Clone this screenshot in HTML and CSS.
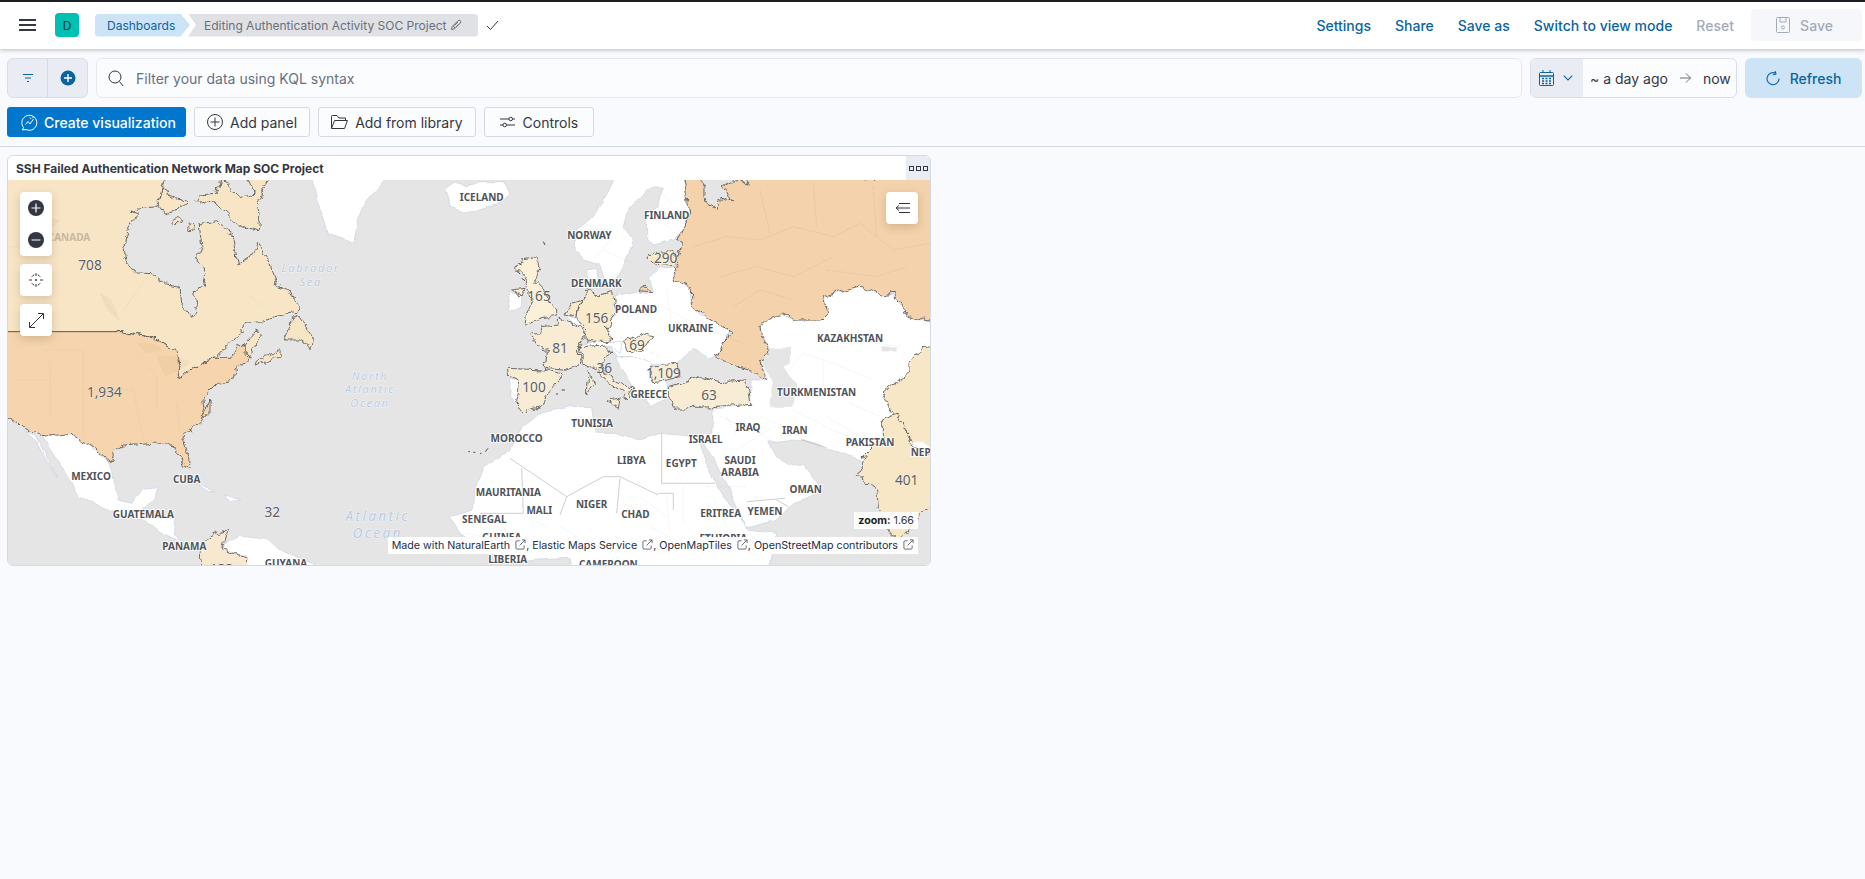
FILE: index.html
```html
<!DOCTYPE html>
<html lang="en">
<head>
<meta charset="utf-8">
<title>Editing Authentication Activity SOC Project</title>
<link rel="stylesheet" href="styles.css">
</head>
<body>
<svg class="defs" width="0" height="0" aria-hidden="true">
  <symbol id="ext" viewBox="0 0 12 12"><path d="M5 2H2.2A1.2 1.2 0 0 0 1 3.200V9.800A1.200 1.200 0 0 0 2.200 11H8.800A1.200 1.200 0 0 0 10 9.800V7M5 7L11 1M7.500 1H11V4.500" fill="none" stroke="#5a6472" stroke-width="1"/></symbol>
</svg>
<header class="topbar">
  <button class="menu" aria-label="menu"><span></span><span></span><span></span></button>
  <div class="logo">D</div>
  <nav class="crumbs">
    <span class="crumb crumb-first">Dashboards</span>
    <span class="crumb crumb-last">Editing Authentication Activity SOC Project
      <svg class="pencil" width="12" height="12" viewBox="0 0 12 12"><path d="M1.500 10.500L2.200 7.500L8 1.700A1.400 1.400 0 0 1 10.300 4L4.500 9.800ZM3 7L5 9M4.500 6.500L8 3M6 8L9.200 4.800" fill="none" stroke="#69707d" stroke-width="1"/></svg>
    </span>
  </nav>
  <svg class="check" width="13" height="11" viewBox="0 0 13 11"><path d="M1 6L4.500 9.500L12 1" fill="none" stroke="#343741" stroke-width="1"/></svg>
  <div class="actions">
    <a class="act">Settings</a>
    <a class="act">Share</a>
    <a class="act">Save as</a>
    <a class="act">Switch to view mode</a>
    <a class="act act-off">Reset</a>
    <span class="save">
      <svg width="14" height="16" viewBox="0 0 14 16"><path d="M1.500 .5H12.500A1 1 0 0 1 13.500 1.500V14.500A1 1 0 0 1 12.500 15.500H1.500A1 1 0 0 1 .5 14.500V1.500A1 1 0 0 1 1.500 .5ZM4 .5V5H10V.5" fill="none" stroke="#a2abba"/><circle cx="7" cy="10.500" r="1.500" fill="none" stroke="#a2abba"/></svg>
      Save
    </span>
  </div>
</header>

<section class="querybar">
  <div class="filters">
    <span class="fcell">
      <svg width="12" height="10" viewBox="0 0 12 10"><path d="M1 1.500H11M3 5H9M5 8.500H7" stroke="#0b64a0" stroke-width="1.200" fill="none"/></svg>
    </span>
    <span class="fcell fcell-last">
      <svg width="16" height="16" viewBox="0 0 16 16"><circle cx="8" cy="8" r="7.500" fill="#0b64a0"/><path d="M8 4V12M4 8H12" stroke="#fff" stroke-width="1.400"/></svg>
    </span>
  </div>
  <div class="search">
    <svg width="16" height="17" viewBox="0 0 16 17"><circle cx="7" cy="7" r="6" fill="none" stroke="#343741"/><path d="M11.500 11.500L15 16" stroke="#343741"/></svg>
    <span>Filter your data using KQL syntax</span>
  </div>
  <div class="dates">
    <span class="cal">
      <svg width="15" height="16" viewBox="0 0 15 16"><rect x=".5" y="2.500" width="14" height="13" rx="1" fill="none" stroke="#0b64a0"/><path d="M.5 6H14.500" stroke="#0b64a0" stroke-width="1.500"/><path d="M4 0V3M11 0V3" stroke="#0b64a0"/><path d="M3 8.500H5M6.500 8.500H8.500M10 8.500H12M3 11H5M6.500 11H8.500M10 11H12M3 13.500H5M6.500 13.500H8.500M10 13.500H12" stroke="#0b64a0" stroke-width="1.300"/></svg>
      <svg width="10" height="6" viewBox="0 0 10 6"><path d="M.7 .7L5 5L9.300 .7" fill="none" stroke="#0b64a0" stroke-width="1.100"/></svg>
    </span>
    <span class="range">~ a day ago
      <svg width="11" height="10" viewBox="0 0 11 10"><path d="M0 5H10.500M6 .5L10.500 5L6 9.500" fill="none" stroke="#69707d"/></svg>
      <em>now</em>
    </span>
  </div>
  <button class="refresh">
    <svg width="14" height="15" viewBox="0 0 14 15"><path d="M10 2.500A6 6 0 1 0 13 7.500" fill="none" stroke="#0b64a0" stroke-width="1.100"/><path d="M9 0L10 3L7 4" fill="none" stroke="#0b64a0" stroke-width="1.100"/></svg>
    Refresh
  </button>
</section>

<section class="toolrow">
  <button class="btn btn-primary">
    <svg width="17" height="17" viewBox="0 0 17 17"><path d="M2.500 13.500A7.500 7.500 0 1 1 5 15.500L1.500 16Z" fill="none" stroke="#fff"/><path d="M4.500 10.500L7 7.500L9 10L12.500 5M9 3.500L10 5M12 2.500V4" fill="none" stroke="#fff"/></svg>
    Create visualization
  </button>
  <button class="btn">
    <svg width="16" height="16" viewBox="0 0 16 16"><circle cx="8" cy="8" r="7.500" fill="none" stroke="#343741"/><path d="M8 3.500V12.500M3.500 8H12.500" stroke="#343741"/></svg>
    Add panel
  </button>
  <button class="btn">
    <svg width="17" height="14" viewBox="0 0 17 14"><path d="M.5 13V1.500A1 1 0 0 1 1.500 .5H6L8 3H14.500V5.500M.5 13.500H13.500L16.500 5.500H3.500Z" fill="none" stroke="#343741"/></svg>
    Add from library
  </button>
  <button class="btn btn-wide">
    <svg width="16" height="12" viewBox="0 0 16 12"><path d="M0 3H9M12.500 3H15M0 9H3M6.500 9H15" stroke="#343741"/><circle cx="10.700" cy="3" r="1.800" fill="none" stroke="#343741"/><circle cx="4.700" cy="9" r="1.800" fill="none" stroke="#343741"/></svg>
    Controls
  </button>
</section>

<main class="content">
  <article class="panel">
    <div class="panel-head">
      <h2>SSH Failed Authentication Network Map SOC Project</h2>
      <span class="panel-opts"><i></i><i></i><i></i></span>
    </div>
    <div class="map">
      <svg class="map-svg" viewBox="8 180 922 385">
        <defs>
          <filter id="rough" filterUnits="userSpaceOnUse" x="-100" y="0" width="1800" height="1400" color-interpolation-filters="sRGB">
            <feTurbulence type="fractalNoise" baseFrequency=".035" numOctaves="4" seed="7" result="n"/>
            <feDisplacementMap in="SourceGraphic" in2="n" scale="26" xChannelSelector="R" yChannelSelector="G"/>
          </filter>
          <filter id="soft" filterUnits="userSpaceOnUse" x="-100" y="0" width="1800" height="1400" color-interpolation-filters="sRGB">
            <feTurbulence type="fractalNoise" baseFrequency=".02" numOctaves="3" seed="3" result="n"/>
            <feDisplacementMap in="SourceGraphic" in2="n" scale="14" xChannelSelector="R" yChannelSelector="G"/>
          </filter>
        </defs>
        <rect x="8" y="180" width="922" height="385" class="sea"/>
        <g transform="translate(0 150) scale(.33333)">
          <g filter="url(#soft)">
            <polygon class="land" points="930,60 950,150 975,210 985,250 1030,265 1060,285 1075,210 1100,150 1180,60"/>
            <polygon class="land" points="1330,115 1360,100 1400,110 1440,95 1510,95 1530,130 1490,165 1440,180 1385,185 1350,170 1345,135"/>
            <polygon class="land" points="125,858 210,850 240,875 270,885 310,920 335,960 340,1000 355,1050 395,1060 430,1015 475,1010 460,1050 425,1085 480,1105 525,1100 520,1155 555,1180 600,1200 600,1190 540,1175 490,1150 430,1115 340,1090 240,1040 190,960"/>
            <polygon class="land" points="75,845 105,855 140,920 170,985 105,870"/>
            <polygon class="land" points="595,1005 645,1025 620,1025 585,1000"/>
            <polygon class="land" points="675,1035 725,1050 685,1055"/>
            <polygon class="land" points="680,1180 720,1155 800,1165 840,1200 950,1248 950,1300 740,1300 740,1220 670,1200"/>
          </g>
          <g filter="url(#rough)">
            <polygon class="ca" points="-20,60 500,60 490,115 480,150 470,170 430,175 385,180 415,190 400,215 380,245 372,290 375,320 400,365 450,368 500,405 540,412 545,460 575,505 590,480 580,420 610,410 618,370 590,320 605,290 598,225 650,215 680,240 700,275 715,345 750,325 775,280 810,340 825,400 870,425 900,470 895,490 855,495 780,515 740,520 700,570 650,620 640,622 585,650 545,685 530,680 540,640 530,605 480,575 440,560 385,550 365,545 -20,545"/>
            <polygon class="ca" points="735,580 770,540 785,560 755,600 750,628 735,610"/>
            <polygon class="ca" points="760,640 800,620 840,600 840,615 790,640 765,650"/>
            <polygon class="ca" points="850,570 880,505 900,495 925,545 940,570 935,592 900,570"/>
            <polygon class="ca" points="590,150 605,165 630,150 680,190 720,230 775,245 780,190 775,165 785,130 820,60 730,60 760,130 720,140 660,85 650,130 600,135"/>
            <polygon class="ca" points="490,110 510,140 560,155 530,180 490,190 475,170"/>
            <ellipse class="ca" cx="530" cy="215" rx="15" ry="9"/>
            <ellipse class="ca" cx="573" cy="231" rx="7" ry="11"/>
            <polygon class="us" points="-20,545 365,545 385,550 440,560 480,575 530,605 540,640 530,680 545,685 585,650 640,622 695,622 712,590 735,580 735,610 750,628 705,660 700,690 650,700 625,725 610,745 615,770 605,810 630,750 630,790 600,820 555,850 550,880 570,930 568,955 550,950 535,910 510,880 480,875 430,880 370,885 340,910 335,940 310,920 270,885 240,875 210,850 150,858 100,845 70,835 50,815 -20,790"/>
            <polygon class="col" points="600,1200 630,1160 685,1135 670,1200 740,1220 738,1300 610,1300"/>
          </g>
          <rect class="flat-ca" x="-20" y="505" width="370" height="40"/>
          <rect class="flat-us" x="-20" y="545" width="370" height="40"/>
          <path class="us-line" d="M-20 545H352"/>
          <path class="patch" d="M470 620C490 610 530 620 575 635L540 660L495 680ZM300 430C340 440 350 480 355 510L320 480ZM120 200L180 210L150 240ZM410 580C450 570 480 590 490 600L440 610Z"/>
          <path class="inner" d="M30 290H130M130 600H250V720H400M150 640V800M250 720V860M400 720L430 870M400 600L470 680M470 680V780M300 430L360 510M370 480L450 370M740 430L790 470M660 680L700 690M530 760L540 850M50 690H150"/>
          <text class="geo" x="1445" y="142">ICELAND</text>
          <text class="geo geo-faint" x="207" y="260">CANADA</text>
          <text class="geo" x="273" y="977">MEXICO</text>
          <text class="geo" x="560" y="987">CUBA</text>
          <text class="geo" x="430" y="1093">GUATEMALA</text>
          <text class="geo" x="553" y="1189">PANAMA</text>
          <text class="geo" x="858" y="1239">GUYANA</text>
          <text class="ocean" x="932" y="354">Labrador</text>
          <text class="ocean" x="932" y="394">Sea</text>
          <text class="ocean" x="1110" y="677">North</text>
          <text class="ocean" x="1110" y="717">Atlantic</text>
          <text class="ocean" x="1110" y="757">Ocean</text>
          <text class="ocean ocean-big" x="1133" y="1097">Atlantic</text>
          <text class="ocean ocean-big" x="1133" y="1147">Ocean</text>
          <text class="count" x="270" y="343">708</text>
          <text class="count" x="313" y="725">1,934</text>
          <text class="count" x="817" y="1085">32</text>
          <text class="count" x="665" y="1255">133</text>
        </g>
        <g transform="translate(460 150) scale(.33333)">
          <g filter="url(#soft)">
            <polygon class="land" points="480,60 440,130 400,200 350,240 345,300 370,330 420,345 435,395 460,400 490,350 510,300 520,270 490,230 500,190 560,120 580,110 610,115 590,170 560,190 560,260 580,285 640,270 680,230 690,190 670,60"/>
            <polygon class="land" points="465,440 535,425 578,428 565,385 600,350 650,350 650,390 690,410 695,470 740,500 810,540 780,610 745,630 700,595 670,620 650,640 575,645 530,620 470,620 450,590 440,530 470,490"/>
            <polygon class="land" points="470,620 530,620 575,640 570,665 580,695 620,690 625,735 610,750 575,770 555,740 520,715 480,650"/>
            <polygon class="land" points="355,585 410,575 490,575 480,610 445,585 365,610"/>
            <polygon class="land" points="315,495 350,505 378,540 340,520"/>
            <polygon class="land" points="385,395 380,360 410,355 415,395 395,420"/>
            <polygon class="land" points="145,425 185,430 185,470 150,485"/>
            <polygon class="land" points="150,680 180,690 170,760 150,740"/>
            <polygon class="land" points="70,950 150,900 190,830 240,790 330,770 395,770 400,810 410,850 470,850 540,870 600,850 710,860 735,935 785,1035 840,1095 860,1140 950,1150 920,1300 350,1300 330,1225 230,1230 150,1240 70,1200 0,1150 -30,1100 40,1080 45,1015"/>
            <polygon class="land" points="710,860 755,850 760,775 870,760 870,690 925,690 900,640 930,600 905,560 900,530 925,505 965,490 1005,510 1080,510 1100,490 1090,440 1200,405 1260,435 1300,430 1345,500 1440,520 1440,920 1205,930 1090,890 1020,870 950,880 925,875 950,920 985,940 1020,950 1030,945 1075,1005 1085,1025 985,1070 950,1110 860,1135 810,1020 770,940 730,880"/>
            <polygon class="sea" points="930,600 990,590 990,640 970,650 1010,700 1000,770 930,770 940,700 905,640"/>
            <rect class="sea" x="1265" y="592" width="45" height="12"/>
          </g>
          <path class="border" d="M150 925L320 1040L430 980H480L595 1035M605 850V1000H765M595 1030H640V1080M185 955L190 1090H60M320 1040L300 1095M480 985L470 1090M1025 870L1090 890M950 1050L985 1070M860 1055L975 1045"/>
          <path class="inner" d="M500 500L610 470L700 520M620 420L640 560M480 560L600 620M960 690L1030 610L1120 640L1240 690M1090 700V640M1030 740L1160 700M1120 560L1320 590M780 800L900 850L950 880M830 900L940 830M1100 800L1200 860M400 330L460 260M430 300L520 340M580 200L640 240M600 120L640 170M740 1010H860M670 1010V1120M540 1040L620 1100M760 1040L800 1130M200 1100L260 1130M300 1130L420 1200M570 1130L720 1210M600 330H700M800 800L830 860M900 800L1000 840M1000 780L1100 830M1170 760L1260 800M1090 830L1190 870M20 1150L120 1170M60 1100L160 1200M620 1040L630 1150"/>
          <g filter="url(#rough)">
            <polygon class="ru" points="665,60 680,130 690,200 650,270 670,280 640,350 650,390 690,410 695,470 740,500 810,540 780,610 765,618 830,650 885,665 920,692 900,640 930,600 905,560 900,530 925,505 965,490 1005,510 1080,510 1100,490 1090,440 1200,405 1260,435 1300,430 1345,500 1440,520 1440,60 1250,60 1240,100 1205,60 870,60 860,105 830,85 790,105 815,155 780,145 775,178 745,165 735,140 735,115 715,60"/>
            <polygon class="uk" points="215,325 235,320 240,350 225,395 250,420 270,460 290,475 290,495 240,505 195,525 200,490 215,460 205,420 190,380 170,360 185,330"/>
            <polygon class="uk" points="160,420 195,415 180,435"/>
            <polygon class="eu" points="300,505 340,520 378,548 355,600 365,640 310,660 255,655 262,605 208,560 245,550 250,530 290,525"/>
            <polygon class="de" points="385,420 415,435 455,425 470,490 440,530 455,570 420,575 378,570 378,540 350,510 365,450"/>
            <polygon class="de" points="335,460 365,450 350,500 315,495"/>
            <polygon class="eu" points="145,655 250,660 310,675 270,720 240,770 190,785 170,760 180,690 150,680"/>
            <polygon class="eu" points="360,590 445,585 455,615 420,640 440,675 490,700 520,715 495,750 490,725 440,690 410,660 370,640"/>
            <polygon class="eu" points="385,665 400,700 380,735 380,700"/>
            <polygon class="eu" points="435,750 480,745 475,772"/>
            <polygon class="eu" points="490,575 550,555 575,560 550,600 510,610"/>
            <polygon class="eu" points="575,645 650,640 660,680 620,690 580,695 570,665"/>
            <polygon class="eu" points="625,710 720,680 780,695 860,690 870,760 760,770 640,775 625,735"/>
            <polygon class="de" points="565,320 600,300 640,300 650,345 600,350"/>
            <polygon class="pl" points="535,425 555,408 578,428"/>
            <polygon class="in" points="1385,590 1440,585 1440,930 1350,870 1335,830 1305,795 1285,770 1265,730 1300,700 1350,670 1350,635 1370,620"/>
            <polygon class="in" points="1270,810 1310,790 1340,840 1350,880 1440,930 1440,1040 1380,1090 1340,1150 1310,1170 1290,1150 1255,1070 1250,1020 1200,980 1190,975 1225,920 1205,925 1270,860"/>
            <polygon class="land land-flat" points="1352,880 1380,875 1440,900 1440,930"/>
          </g>
          <path class="inner inner-ru" d="M700 290L800 260L900 270L1000 230L1120 260L1200 220L1300 300L1410 280M780 380L890 350L1000 380L1120 320M820 470L900 420L1000 450M1060 100L1070 230M900 120L930 250M1240 110L1250 260M750 540L850 580M1100 360L1250 380L1340 350"/>
          <path class="specks" d="M175 340L185 345M170 360L180 372M185 385L195 392M250 275L255 285M25 905H30M40 907H46M60 910H64M76 905L84 895M288 732H294M305 720H315M812 1085H822"/>
          <text class="geo" x="620" y="195">FINLAND</text>
          <text class="geo" x="388" y="256">NORWAY</text>
          <text class="geo" x="409" y="398">DENMARK</text>
          <text class="geo" x="528" y="477">POLAND</text>
          <text class="geo" x="692" y="535">UKRAINE</text>
          <text class="geo" x="1170" y="563">KAZAKHSTAN</text>
          <text class="geo" x="1070" y="727">TURKMENISTAN</text>
          <text class="geo" x="567" y="733">GREECE</text>
          <text class="geo" x="396" y="820">TUNISIA</text>
          <text class="geo" x="864" y="832">IRAQ</text>
          <text class="geo" x="1005" y="840">IRAN</text>
          <text class="geo" x="170" y="863">MOROCCO</text>
          <text class="geo" x="737" y="868">ISRAEL</text>
          <text class="geo" x="514" y="930">LIBYA</text>
          <text class="geo" x="664" y="939">EGYPT</text>
          <text class="geo" x="840" y="930">SAUDI</text>
          <text class="geo" x="840" y="966">ARABIA</text>
          <text class="geo" x="1230" y="876">PAKISTAN</text>
          <text class="geo" x="1400" y="905">NEPAL</text>
          <text class="geo" x="1037" y="1016">OMAN</text>
          <text class="geo" x="145" y="1027">MAURITANIA</text>
          <text class="geo" x="238" y="1081">MALI</text>
          <text class="geo" x="395" y="1063">NIGER</text>
          <text class="geo" x="526" y="1092">CHAD</text>
          <text class="geo" x="782" y="1088">ERITREA</text>
          <text class="geo" x="915" y="1083">YEMEN</text>
          <text class="geo" x="73" y="1108">SENEGAL</text>
          <text class="geo" x="125" y="1160">GUINEA</text>
          <text class="geo" x="790" y="1163">ETHIOPIA</text>
          <text class="geo" x="143" y="1228">LIBERIA</text>
          <text class="geo" x="445" y="1242">CAMEROON</text>
          <text class="count" x="237" y="438">165</text>
          <text class="count" x="410" y="502">156</text>
          <text class="count" x="300" y="594">81</text>
          <text class="count" x="222" y="710">100</text>
          <text class="count" x="433" y="653">36</text>
          <text class="count" x="531" y="583">69</text>
          <text class="count" x="617" y="323">290</text>
          <text class="count" x="610" y="667">1,109</text>
          <text class="count" x="747" y="734">63</text>
          <text class="count" x="1340" y="988">401</text>
        </g>
      </svg>
      <div class="ctl ctl-zoom">
        <span class="ctl-cell"><svg width="16" height="16" viewBox="0 0 16 16"><circle cx="8" cy="8" r="8" fill="#343741"/><path d="M8 3.500V12.500M3.500 8H12.500" stroke="#fff" stroke-width="1.200"/></svg></span>
        <span class="ctl-cell"><svg width="16" height="16" viewBox="0 0 16 16"><circle cx="8" cy="8" r="8" fill="#343741"/><path d="M3.500 8H12.500" stroke="#fff" stroke-width="1.200"/></svg></span>
      </div>
      <div class="ctl ctl-locate"><span class="ctl-cell"><svg width="16" height="16" viewBox="0 0 16 16"><path d="M3.800 4.800A5.500 5.500 0 0 1 6.200 2.800M9.800 2.800A5.500 5.500 0 0 1 12.200 4.800M12.200 11.200A5.500 5.500 0 0 1 9.800 13.200M6.200 13.200A5.500 5.500 0 0 1 3.800 11.200" fill="none" stroke="#343741"/><circle cx="8" cy="8" r="1" fill="#343741"/><path d="M8 1V4M8 12V15M1 8H4M12 8H15" stroke="#343741"/></svg></span></div>
      <div class="ctl ctl-expand"><span class="ctl-cell"><svg width="15" height="15" viewBox="0 0 15 15"><path d="M1 14L14 1M9 .5H14.500V6M.5 9V14.500H6" fill="none" stroke="#343741"/></svg></span></div>
      <div class="ctl ctl-layers"><span class="ctl-cell"><svg width="15" height="10" viewBox="0 0 15 10"><path d="M4 .5H15M1 5H15M4 9.500H15M4 2.500L1 5L4 7.500" fill="none" stroke="#343741"/></svg></span></div>
      <div class="zoomtag"><b>zoom:</b> 1.66</div>
      <div class="attrib">Made with NaturalEarth <svg class="ext"><use href="#ext"/></svg>, Elastic Maps Service <svg class="ext"><use href="#ext"/></svg>, OpenMapTiles <svg class="ext"><use href="#ext"/></svg>, OpenStreetMap contributors <svg class="ext"><use href="#ext"/></svg></div>
    </div>
  </article>
</main>
</body>
</html>
```
FILE: styles.css
```css
* { box-sizing: border-box; }
html, body { height: 100%; }
body {
  margin: 0;
  background: #f8fafd;
  font-family: Inter, "Liberation Sans", sans-serif;
  font-size: 14px;
  color: #343741;
  overflow: hidden;
}
button { font: inherit; cursor: pointer; }
.defs { position: absolute; }

.topbar {
  height: 49px;
  border-top: 2px solid #1d1e24;
  background: #fff;
  box-shadow: 0 1px 4px rgba(60, 70, 90, .35);
  display: flex;
  align-items: center;
  padding: 0 3px 0 19px;
}
.menu {
  width: 17px;
  height: 12px;
  padding: 0;
  border: 0;
  background: none;
  display: flex;
  flex-direction: column;
  justify-content: space-between;
  margin-top: -1px;
}
.menu span { display: block; height: 2px; background: #343741; }
.logo {
  width: 24px;
  height: 24px;
  margin-left: 19px;
  border-radius: 4px;
  background: #00bfb3;
  color: #1d3b3a;
  font-size: 12px;
  display: flex;
  align-items: center;
  justify-content: center;
  margin-top: -1px;
}
.crumbs { display: flex; margin-left: 16px; font-size: 12px; margin-top: -1px; }
.crumb { height: 23px; display: flex; align-items: center; white-space: nowrap; }
.crumb-first {
  width: 95px;
  padding-left: 12px;
  background: #cce4f5;
  color: #0b64a0;
  border-radius: 4px 0 0 4px;
  clip-path: polygon(0 0, 90% 0, 100% 50%, 90% 100%, 0 100%);
}
.crumb-last {
  width: 290px;
  margin-left: -2px;
  padding-left: 16px;
  background: #e0e1e5;
  color: #69707d;
  border-radius: 0 4px 4px 0;
  clip-path: polygon(0 0, 100% 0, 100% 100%, 0 100%, 8px 50%);
}
.pencil { margin-left: 4px; }
.check { margin-left: 8px; margin-top: -1px; }
.actions { margin-left: auto; display: flex; align-items: center; gap: 24px; margin-top: -1px; }
.act { color: #0b64a0; font-weight: 450; font-size: 14px; }
.act-off { color: #a2abba; }
.save {
  width: 111px;
  height: 32px;
  margin-left: -7px;
  background: #f5f7fa;
  border-radius: 4px;
  color: #a2abba;
  font-weight: 450;
  display: flex;
  align-items: center;
  justify-content: center;
  gap: 10px;
  padding-right: 4px;
}

.querybar {
  display: flex;
  height: 40px;
  margin-top: 9px;
  padding: 0 3px 0 7px;
}
.filters {
  width: 81px;
  display: flex;
  background: #e9edf3;
  border: 1px solid #d8dee8;
  border-radius: 6px;
}
.fcell { flex: 1; display: flex; align-items: center; justify-content: center; }
.fcell-last { border-left: 1px solid #d3dae6; }
.search {
  flex: 1;
  margin-left: 8px;
  background: #fbfcfd;
  border: 1px solid #e6e9f0;
  border-radius: 6px;
  display: flex;
  align-items: center;
  padding-left: 11px;
  gap: 12px;
  color: #69707d;
}
.dates {
  width: 207px;
  margin-left: 8px;
  display: flex;
  background: #fbfcfd;
  border: 1px solid #d8dee8;
  border-radius: 6px;
  overflow: hidden;
}
.cal {
  width: 52px;
  background: #e9edf3;
  display: flex;
  align-items: center;
  justify-content: center;
  gap: 9px;
  padding-right: 2px;
}
.range { display: flex; align-items: center; padding-left: 7px; gap: 12px; font-size: 14px; white-space: nowrap; }
.range em { font-style: normal; }
.refresh {
  width: 117px;
  margin-left: 8px;
  border: 0;
  border-radius: 6px;
  background: #cce4f5;
  color: #0b64a0;
  font-weight: 450;
  display: flex;
  align-items: center;
  justify-content: center;
  gap: 10px;
  padding: 0;
}

.toolrow {
  display: flex;
  gap: 8px;
  height: 40px;
  margin-top: 9px;
  padding: 0 0 9px 7px;
  border-bottom: 1px solid #d3dae6;
}
.btn {
  height: 30px;
  padding: 0 12px;
  background: #fbfcfd;
  border: 1px solid #d3dae6;
  border-radius: 3px;
  color: #343741;
  display: flex;
  align-items: center;
  gap: 7px;
  white-space: nowrap;
}
.btn-primary {
  width: 179px;
  padding: 0 0 0 13px;
  gap: 6px;
  background: #0077cc;
  border-color: #0077cc;
  color: #fff;
  font-weight: 450;
}
.btn-wide { padding: 0 15px; }

.content { padding: 8px 0 0 7px; }
.panel {
  width: 924px;
  height: 411px;
  background: #fff;
  border: 1px solid #d3dae6;
  border-radius: 6px;
  overflow: hidden;
}
.panel-head { height: 24px; display: flex; align-items: center; justify-content: space-between; padding-left: 8px; }
.panel-head h2 { margin: 0; font-size: 12px; font-weight: 700; color: #343741; }
.panel-opts {
  width: 24px;
  height: 24px;
  background: #e9edf3;
  display: flex;
  align-items: center;
  justify-content: center;
  gap: 2px;
}
.panel-opts i { width: 5px; height: 5px; border: 1px solid #343741; }

.map { position: relative; height: 385px; overflow: hidden; }
.map-svg { display: block; width: 922px; height: 385px; }
.sea { fill: #e5e5e6; }
.land { fill: #fff; stroke: #c6d0e0; stroke-width: 2; }
.land-flat { stroke: none; }
.ca, .us, .ru, .col, .uk, .eu, .de, .pl, .in { stroke: #4a4a4a; stroke-width: 2.400; stroke-linejoin: round; }
.ca, .flat-ca { fill: #f8e5c6; }
.us, .flat-us { fill: #f6d5ae; }
.us-line { stroke: #5c5650; stroke-width: 3; fill: none; }
.ru { fill: #f4d2ab; }
.pl { fill: #f6d5ae; }
.col { fill: #f7e8cf; }
.uk { fill: #fdf0d8; }
.eu { fill: #f9ecd4; }
.de { fill: #f9eacb; }
.in { fill: #f8e7c6; }
.patch { fill: rgba(170, 130, 80, .07); }
.specks { fill: none; stroke: #4a4a4a; stroke-width: 3; }
.inner { fill: none; stroke: rgba(120, 120, 130, .22); stroke-width: 1.500; stroke-dasharray: 5 3; }
.inner-ru { stroke: rgba(150, 110, 70, .28); }
.border { fill: none; stroke: #b4b7bd; stroke-width: 2; }
.geo, .count, .ocean {
  text-anchor: middle;
  dominant-baseline: central;
  paint-order: stroke;
  stroke-linejoin: round;
  font-family: "Noto Sans", "Open Sans", sans-serif;
}
.geo { font-size: 30px; font-weight: 700; fill: #505359; stroke: rgba(255, 255, 255, .85); stroke-width: 6px; }
.geo-faint { fill: #c9b89f; stroke: none; }
.count { font-size: 41px; fill: #5c5f66; stroke: rgba(255, 255, 255, .55); stroke-width: 3px; }
.ocean { font-size: 33px; font-style: italic; letter-spacing: 5px; fill: #b8cbe4; stroke: rgba(255, 255, 255, .7); stroke-width: 3px; }
.ocean-big { font-size: 41px; letter-spacing: 7px; }

.ctl {
  position: absolute;
  width: 32px;
  background: #fff;
  border-radius: 4px;
  box-shadow: 0 3px 10px rgba(90, 70, 40, .22);
}
.ctl-cell { height: 32px; display: flex; align-items: center; justify-content: center; }
.ctl-zoom { left: 12px; top: 12px; }
.ctl-locate { left: 12px; top: 84px; }
.ctl-expand { left: 12px; top: 124px; }
.ctl-layers { left: 878px; top: 12px; }
.zoomtag {
  position: absolute;
  right: 12px;
  top: 332px;
  height: 17px;
  padding: 0 4px;
  background: rgba(255, 255, 255, .92);
  color: #343741;
  font-size: 10.700px;
  line-height: 17px;
  white-space: nowrap;
}
.zoomtag b { font-weight: 700; color: #1a1c21; }
.attrib {
  position: absolute;
  right: 12px;
  top: 357px;
  height: 17px;
  padding: 0 4px;
  background: rgba(255, 255, 255, .95);
  color: #1f2d45;
  font-size: 10.700px;
  line-height: 17px;
  white-space: nowrap;
}
.ext { width: 11px; height: 11px; margin-left: 2px; vertical-align: -1px; }
```
